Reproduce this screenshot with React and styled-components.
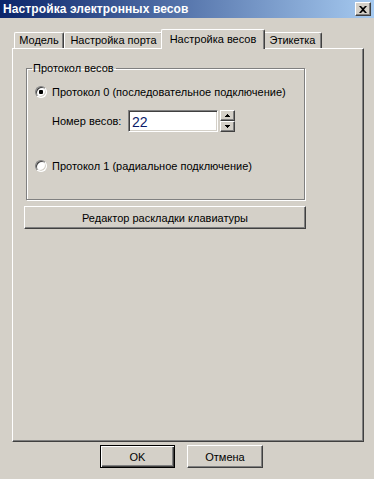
import React from 'react';
import styled, { createGlobalStyle } from 'styled-components';

const Global = createGlobalStyle`
  html, body { margin: 0; padding: 0; background: #D4D0C8; }
  body { font-family: "Liberation Sans", Arial, sans-serif; font-size: 11px; color: #000; }
  * { box-sizing: border-box; }
`;

const Window = styled.div`
  width: 374px;
  height: 479px;
  background: #D4D0C8;
  display: flex;
  flex-direction: column;
  overflow: hidden;
`;

const TitleBar = styled.div`
  height: 18px;
  flex: none;
  display: flex;
  align-items: center;
  justify-content: space-between;
  padding: 0 3px 0 3px;
  background: linear-gradient(to right, #0A246A, #A6CAF0);
`;

const Title = styled.span`
  color: #fff;
  font-weight: bold;
  font-size: 12px;
  letter-spacing: 0.1px;
`;

const bevel = `
  border-top: 1px solid #fff;
  border-left: 1px solid #fff;
  border-right: 1px solid #404040;
  border-bottom: 1px solid #404040;
  box-shadow: inset -1px -1px 0 #808080;
  background: #D4D0C8;
`;

const CloseBtn = styled.button`
  ${bevel}
  width: 16px;
  height: 14px;
  padding: 0;
  display: flex;
  align-items: center;
  justify-content: center;
`;

const Body = styled.div`
  flex: 1;
  display: flex;
  flex-direction: column;
  padding: 11px 0 0 12px;
`;

const TabStrip = styled.div`
  height: 19px;
  display: flex;
  align-items: flex-end;
  padding-left: 2px;
`;

const Tab = styled.div`
  position: relative;
  z-index: ${p => (p.$active ? 1 : 0)};
  width: ${p => p.$w}px;
  height: ${p => (p.$active ? 20 : 16)}px;
  margin: 0 ${p => (p.$active ? -2 : 0)}px ${p => (p.$active ? -1 : 0)}px;
  border-top: 1px solid #fff;
  border-left: 1px solid #fff;
  border-right: 1px solid #404040;
  border-top-left-radius: 2px;
  border-top-right-radius: 2px;
  box-shadow: inset -1px 0 0 #808080;
  background: #D4D0C8;
  display: flex;
  justify-content: center;
  padding-top: ${p => (p.$active ? 3 : 1)}px;
  font-size: 11px;
  line-height: 13px;
  white-space: nowrap;
`;

const Panel = styled.div`
  width: 352px;
  height: 394px;
  flex: none;
  border-top: 1px solid #fff;
  border-left: 1px solid #fff;
  border-right: 1px solid #404040;
  border-bottom: 1px solid #404040;
  box-shadow: inset -1px -1px 0 #808080;
  display: flex;
  flex-direction: column;
  padding: 13px 0 0 13px;
`;

const GroupBox = styled.fieldset`
  margin: 0;
  padding: 0;
  min-width: 0;
  width: 279px;
  height: 138px;
  border: 1px solid #808080;
  box-shadow: 1px 1px 0 #fff, inset 1px 1px 0 #fff;
`;

const Legend = styled.legend`
  margin-left: 5px;
  padding: 0 2px 0 1px;
  font-size: 11px;
  line-height: 13px;
`;

const GroupContent = styled.div`
  display: flex;
  flex-direction: column;
  padding: 10px 0 0 8px;
`;

const RadioRow = styled.label`
  display: flex;
  align-items: center;
  gap: 5px;
  height: 13px;
  margin-top: ${p => p.$mt || 0}px;
  font-size: 11px;
  white-space: nowrap;
`;

const RadioDot = styled.span`
  width: 12px;
  height: 12px;
  flex: none;
  border-radius: 50%;
  border-style: solid;
  border-width: 1px;
  border-color: #808080 #fff #fff #808080;
  box-shadow: inset 1px 1px 0 #404040, inset -1px -1px 0 #D4D0C8;
  background: #fff;
  display: flex;
  align-items: center;
  justify-content: center;
  &::after {
    content: "";
    width: 4px;
    height: 4px;
    border-radius: 1px;
    background: ${p => (p.$checked ? '#000' : 'transparent')};
  }
`;

const NumberRow = styled.div`
  display: flex;
  align-items: flex-start;
  margin: 12px 0 0 17px;
`;

const FieldLabel = styled.span`
  width: 76px;
  font-size: 11px;
  line-height: 22px;
`;

const Input = styled.div`
  width: 90px;
  height: 22px;
  border-style: solid;
  border-width: 1px;
  border-color: #808080 #fff #fff #808080;
  box-shadow: inset 1px 1px 0 #404040, inset -1px -1px 0 #D4D0C8;
  background: #fff;
  padding: 2px 0 0 3px;
  font-size: 14px;
  line-height: 18px;
  color: #0a1a6a;
`;

const Spin = styled.div`
  display: flex;
  flex-direction: column;
  margin-left: 2px;
`;

const SpinBtn = styled.div`
  ${bevel}
  width: 15px;
  height: 11px;
  display: flex;
  align-items: center;
  justify-content: center;
`;

const Button = styled.button`
  ${bevel}
  width: ${p => p.$w}px;
  height: 23px;
  padding: 0;
  margin: ${p => p.$m || '0'};
  font-family: "Liberation Sans", Arial, sans-serif;
  font-size: 11px;
  color: #000;
`;

const DefaultButton = styled(Button)`
  border: 1px solid #000;
  box-shadow: inset 1px 1px 0 #fff, inset -1px -1px 0 #404040, inset -2px -2px 0 #808080;
`;

const ButtonRow = styled.div`
  display: flex;
  gap: 12px;
  padding: 3px 0 0 88px;
`;

const Up = () => (
  <svg width="5" height="3" viewBox="0 0 5 3"><path d="M2 0h1v1h1v1h1v1H0V2h1V1h1z" fill="#000" /></svg>
);
const Down = () => (
  <svg width="5" height="3" viewBox="0 0 5 3"><path d="M0 0h5v1H4v1H3v1H2V2H1V1H0z" fill="#000" /></svg>
);

export default function App() {
  return (
    <>
      <Global />
      <Window>
        <TitleBar>
          <Title>Настройка электронных весов</Title>
          <CloseBtn aria-label="close">
            <svg width="8" height="7" viewBox="0 0 8 7">
              <path d="M0 0h2l2 2 2-2h2L5 3.5 8 7H6L4 5 2 7H0l3-3.5z" fill="#000" />
            </svg>
          </CloseBtn>
        </TitleBar>
        <Body>
          <TabStrip>
            <Tab $w={50}>Модель</Tab>
            <Tab $w={99}>Настройка порта</Tab>
            <Tab $w={104} $active>Настройка весов</Tab>
            <Tab $w={59}>Этикетка</Tab>
          </TabStrip>
          <Panel>
            <GroupBox>
              <Legend>Протокол весов</Legend>
              <GroupContent>
                <RadioRow>
                  <RadioDot $checked />
                  Протокол 0 (последовательное подключение)
                </RadioRow>
                <NumberRow>
                  <FieldLabel>Номер весов:</FieldLabel>
                  <Input>22</Input>
                  <Spin>
                    <SpinBtn><Up /></SpinBtn>
                    <SpinBtn><Down /></SpinBtn>
                  </Spin>
                </NumberRow>
                <RadioRow $mt={27}>
                  <RadioDot />
                  Протокол 1 (радиальное подключение)
                </RadioRow>
              </GroupContent>
            </GroupBox>
            <Button $w={282} $m="6px 0 0 -2px">Редактор раскладки клавиатуры</Button>
          </Panel>
          <ButtonRow>
            <DefaultButton $w={75}>OK</DefaultButton>
            <Button $w={76}>Отмена</Button>
          </ButtonRow>
        </Body>
      </Window>
    </>
  );
}
